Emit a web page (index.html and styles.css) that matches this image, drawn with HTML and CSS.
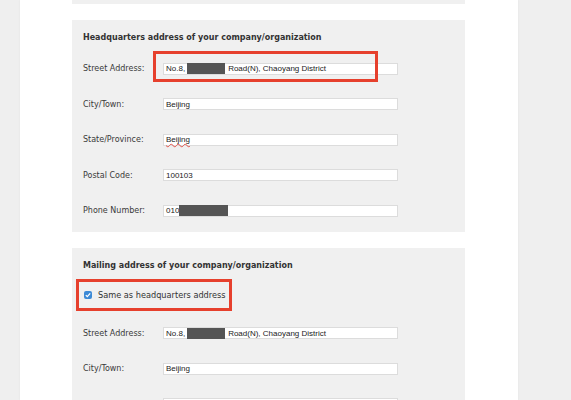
FILE: index.html
```html
<!DOCTYPE html>
<html lang="en">
<head>
    <meta charset="UTF-8">
    <title>Company Address</title>
    <link rel="stylesheet" href="styles.css">
</head>
<body>
    <div class="page">
        <div class="panel panel-stub"></div>

        <div class="panel">
            <h2 class="panel-title">Headquarters address of your company/organization</h2>
            <div class="row">
                <span class="label">Street Address:</span>
                <div class="field">
                    <span>No.8,</span><span class="redact redact-road"></span><span>Road(N), Chaoyang District</span>
                    <div class="mark mark-street"></div>
                </div>
            </div>
            <div class="row">
                <span class="label">City/Town:</span>
                <div class="field">Beijing</div>
            </div>
            <div class="row">
                <span class="label">State/Province:</span>
                <div class="field"><span class="misspelt">Beijing</span></div>
            </div>
            <div class="row">
                <span class="label">Postal Code:</span>
                <div class="field">100103</div>
            </div>
            <div class="row">
                <span class="label">Phone Number:</span>
                <div class="field">
                    <span>010</span><span class="redact redact-phone"></span>
                </div>
            </div>
        </div>

        <div class="panel panel-last">
            <h2 class="panel-title">Mailing address of your company/organization</h2>
            <label class="same-box">
                <span class="check">
                    <svg width="8" height="8" viewBox="0 0 8 8"><path d="M1.8 4.1 L3.3 5.6 L6.2 2.4" fill="none" stroke="#fff" stroke-width="1.3"/></svg>
                </span>
                Same as headquarters address
            </label>
            <div class="row">
                <span class="label">Street Address:</span>
                <div class="field">
                    <span>No.8,</span><span class="redact redact-road"></span><span>Road(N), Chaoyang District</span>
                </div>
            </div>
            <div class="row">
                <span class="label">City/Town:</span>
                <div class="field">Beijing</div>
            </div>
            <div class="row">
                <span class="label">State/Province:</span>
                <div class="field"></div>
            </div>
        </div>
    </div>
</body>
</html>
```

FILE: styles.css
```css
body {
    margin: 0;
    background-color: #efefef;
    font-family: "DejaVu Sans", Verdana, sans-serif;
    color: #333;
    height: 400px;
    overflow: hidden;
}
.page {
    margin-left: 20px;
    width: 446px;
    padding-left: 52px;
    background-color: #fff;
    height: 400px;
    box-shadow: 0 0 2px rgba(0, 0, 0, 0.06);
}
.panel {
    box-sizing: border-box;
    background-color: #f0f0f0;
    width: 393px;
    padding: 13px 0 3px 11px;
    margin-bottom: 16px;
}
.panel-stub {
    height: 4px;
    padding: 0;
}
.panel-title {
    margin: 0 0 8px 0;
    font-size: 8px;
    line-height: 10px;
    font-weight: bold;
    color: #333;
}
.row {
    display: flex;
    align-items: center;
    height: 35.5px;
}
.label {
    width: 80px;
    font-size: 8px;
    color: #3a3a3a;
}
.field {
    position: relative;
    display: flex;
    align-items: center;
    box-sizing: border-box;
    width: 235px;
    height: 12px;
    padding-left: 2px;
    background-color: #fff;
    border: 1px solid #dcdcdc;
    font-family: "Liberation Sans", Arial, sans-serif;
    font-size: 8px;
    color: #222;
}
.redact {
    display: inline-block;
    height: 11px;
    background-color: #555;
}
.redact-road {
    width: 38px;
    margin: 0 3px 0 2px;
}
.redact-phone {
    width: 49px;
}
.misspelt {
    text-decoration: underline wavy #e0524a;
    text-decoration-thickness: 1px;
}
.mark {
    position: absolute;
    box-sizing: border-box;
    border: 3px solid #e6402d;
}
.mark-street {
    left: -11px;
    top: -13px;
    width: 225px;
    height: 31px;
}
.same-box {
    display: flex;
    align-items: center;
    gap: 6px;
    box-sizing: border-box;
    height: 32px;
    width: 156px;
    margin: 0 0 5px -7px;
    padding-left: 5px;
    border: 3px solid #e6402d;
    font-size: 8.2px;
    color: #333;
    white-space: nowrap;
}
.check {
    display: flex;
    align-items: center;
    justify-content: center;
    width: 8px;
    height: 8px;
    border-radius: 2px;
    background-color: #3d8ad6;
}
```
